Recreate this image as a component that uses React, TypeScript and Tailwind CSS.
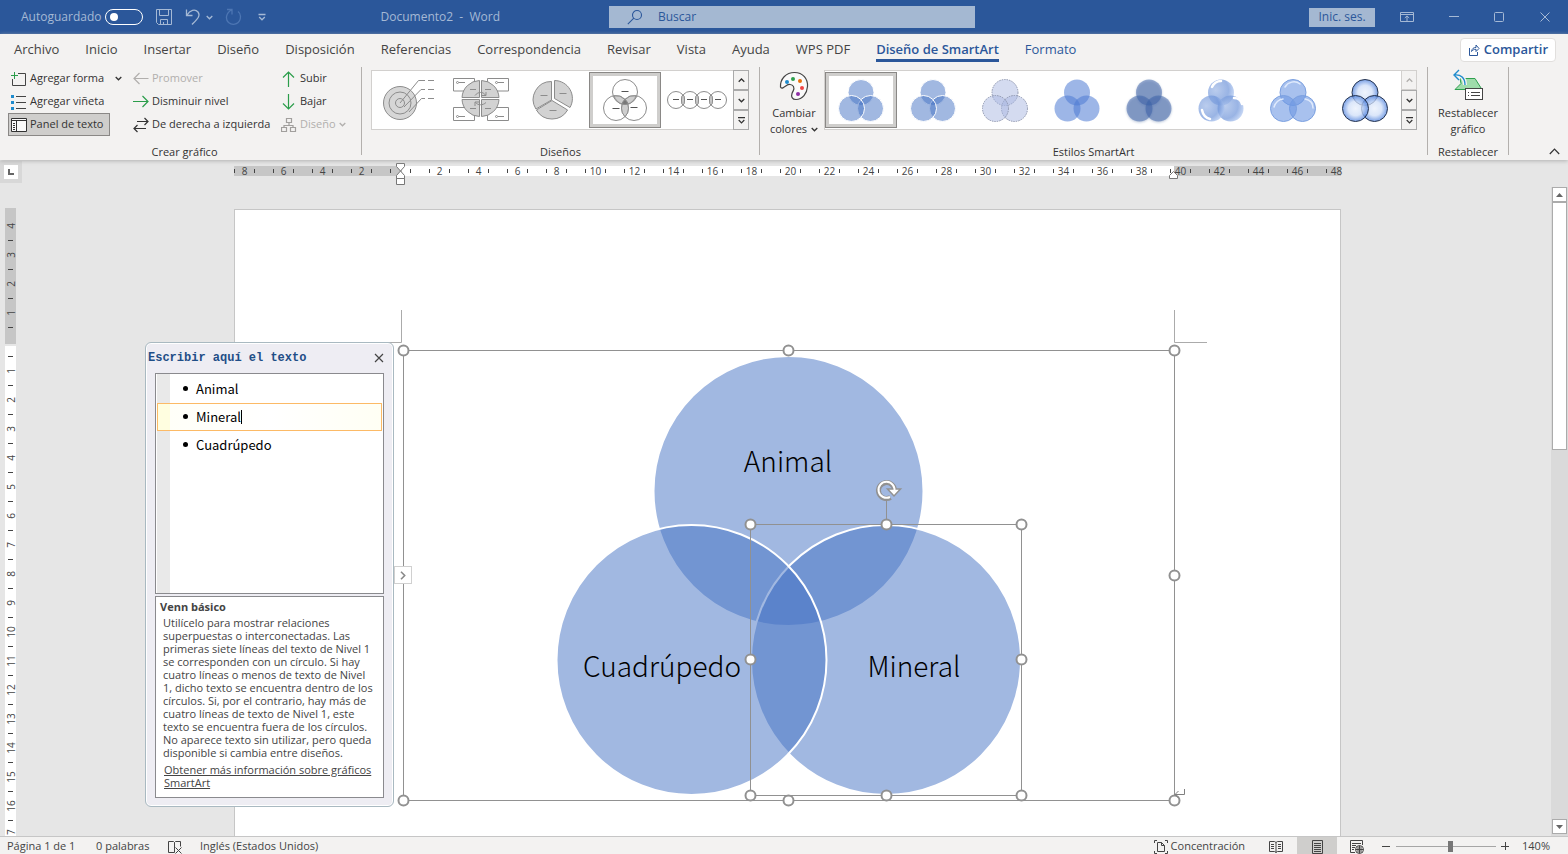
import type { ReactNode } from "react";

interface Tab {
  label: string;
  state?: "active" | "context";
}

const tabs: Tab[] = [
  { label: "Archivo" },
  { label: "Inicio" },
  { label: "Insertar" },
  { label: "Diseño" },
  { label: "Disposición" },
  { label: "Referencias" },
  { label: "Correspondencia" },
  { label: "Revisar" },
  { label: "Vista" },
  { label: "Ayuda" },
  { label: "WPS PDF" },
  { label: "Diseño de SmartArt", state: "active" },
  { label: "Formato", state: "context" },
];

const description = [
  "Utilícelo para mostrar relaciones",
  "superpuestas o interconectadas. Las",
  "primeras siete líneas del texto de Nivel 1",
  "se corresponden con un círculo. Si hay",
  "cuatro líneas o menos de texto de Nivel",
  "1, dicho texto se encuentra dentro de los",
  "círculos. Si, por el contrario, hay más de",
  "cuatro líneas de texto de Nivel 1, este",
  "texto se encuentra fuera de los círculos.",
  "No aparece texto sin utilizar, pero queda",
  "disponible si cambia entre diseños.",
];

const bullets = ["Animal", "Mineral", "Cuadrúpedo"];
const horizontalMarks = Array.from({ length: 29 }, (_, i) => i * 2 - 8);
const verticalMarks = Array.from({ length: 22 }, (_, i) => i - 4);

function Chevron({ up = false, className = "" }: { up?: boolean; className?: string }) {
  return (
    <svg width="7" height="5" viewBox="0 0 7 5" className={className} fill="none" stroke="currentColor" strokeWidth="1.3">
      <path d={up ? "M.7 3.8 3.5 1l2.8 2.8" : "M.7 1l2.8 2.8L6.3 1"} />
    </svg>
  );
}

function TitleBar() {
  return (
    <header className="grid h-[34px] shrink-0 grid-cols-[609fr_366fr_593fr] items-center bg-[#2b579a] text-xs text-[#a5b9d5]">
      <div className="flex items-center pl-[21px]">
        <label className="flex items-center gap-1">
          Autoguardado
          <input
            type="checkbox"
            className="h-4 w-[38px] appearance-none rounded-full border border-white before:ml-1 before:mt-[3px] before:block before:size-2 before:rounded-full before:bg-white"
          />
        </label>
        <button aria-label="Guardar" className="ml-3">
          <svg width="18" height="18" viewBox="0 0 18 18" fill="none" stroke="currentColor">
            <path d="M1.5 1.500h15v15h-13l-2-2zM4.500 1.500v6h9v-6M5.500 16.500v-5h7v5M8.500 16v-2" />
          </svg>
        </button>
        <button aria-label="Deshacer" className="ml-3 flex items-center gap-1">
          <svg width="17" height="18" viewBox="0 0 17 18" fill="none" stroke="currentColor" strokeWidth="1.300">
            <path d="M1.500 1.500v6h6M2 7C5 2 10 .5 13 4c3 4-1 7.500-6 12.500" />
          </svg>
          <Chevron />
        </button>
        <button aria-label="Rehacer" disabled className="ml-3 text-[#4d76b3]">
          <svg width="17" height="18" viewBox="0 0 17 18" fill="none" stroke="currentColor" strokeWidth="1.300">
            <path d="M2 1.500h5v5M6.500 2C1 5 0 11 3.500 14.500c5 4 12 1 12-6 0-2-1-4-2.500-5" />
          </svg>
        </button>
        <button aria-label="Personalizar barra" className="ml-4">
          <svg width="8" height="8" viewBox="0 0 8 8" fill="none" stroke="currentColor" strokeWidth="1.300">
            <path d="M.5 1.500h7M1.200 4 4 6.800 6.800 4" />
          </svg>
        </button>
        <span className="ml-auto mr-[109px] whitespace-pre">Documento2  -  Word</span>
      </div>
      <label className="flex h-[22px] items-center bg-[#a4b8d2] text-[#2b579a]">
        <svg width="16" height="16" viewBox="0 0 16 16" className="ml-[18px]" fill="none" stroke="currentColor" strokeWidth="1.100">
          <circle cx="10" cy="6" r="4.500" />
          <path d="M6.800 9.200.8 15.200" />
        </svg>
        <input type="text" placeholder="Buscar" aria-label="Buscar" className="ml-[15px] min-w-0 flex-1 bg-transparent outline-none placeholder:text-[#2b579a]" />
      </label>
      <div className="flex items-center justify-end pr-[18px]">
        <button className="h-[19px] w-[66px] bg-[#a4b8d2] text-[#2b579a]">Inic. ses.</button>
        <button aria-label="Opciones de la cinta" className="ml-[25px]">
          <svg width="14" height="12" viewBox="0 0 14 12" fill="none" stroke="currentColor">
            <path d="M.5 1.500h13v9H.5zM.5 3.500h13M7 10V5M4.800 7 7 4.900 9.200 7" />
          </svg>
        </button>
        <button aria-label="Minimizar" className="ml-[35px]">
          <svg width="10" height="12" viewBox="0 0 10 12" stroke="currentColor"><path d="M0 5.500h10" /></svg>
        </button>
        <button aria-label="Maximizar" className="ml-[35px]">
          <svg width="11" height="12" viewBox="0 0 11 12" fill="none" stroke="currentColor"><rect x=".5" y="1.500" width="9" height="9" rx="1" /></svg>
        </button>
        <button aria-label="Cerrar" className="ml-[35px]">
          <svg width="10" height="12" viewBox="0 0 10 12" fill="none" stroke="currentColor"><path d="M.5 1.500l9 9M9.500 1.500l-9 9" /></svg>
        </button>
      </div>
    </header>
  );
}

function Tabs() {
  return (
    <nav className="flex h-[31px] items-center pl-px pr-3 text-[13px]">
      {tabs.map((tab) => (
        <button
          key={tab.label}
          className={`h-full whitespace-nowrap px-[13px] ${tab.state ? "text-[#2b579a]" : "text-[#444]"} ${
            tab.state === "active" ? "font-semibold" : ""
          }`}
        >
          <span className={`block border-b-[3px] pt-[2px] leading-5 ${tab.state === "active" ? "border-[#2b579a]" : "border-transparent"}`}>
            {tab.label}
          </span>
        </button>
      ))}
      <button className="ml-auto flex h-6 items-center gap-1 rounded-sm border border-[#e1dfdd] bg-white px-[7px] font-semibold text-[#2b579a]">
        <svg width="12" height="12" viewBox="0 0 12 12" fill="none" stroke="currentColor">
          <path d="M1.500 4v7.500h8V8M3.500 7.500c.5-3 2-4 4.500-4V1l3 3.500-3 3V5.300c-2 0-3.500.7-4.500 2.200z" />
        </svg>
        Compartir
      </button>
    </nav>
  );
}

function Group({ label, className, children }: { label: string; className: string; children: ReactNode }) {
  return (
    <section className={`flex flex-col border-r border-[#b3b0ad] ${className}`}>
      <div className="flex h-[77px] shrink-0">{children}</div>
      <h2 className="shrink-0 text-center leading-4">{label}</h2>
    </section>
  );
}

function CommandButton({ icon, children, disabled, pressed }: { icon: ReactNode; children: ReactNode; disabled?: boolean; pressed?: boolean }) {
  return (
    <button
      disabled={disabled}
      aria-pressed={pressed}
      className={`flex h-[23px] items-center gap-[3px] whitespace-nowrap border px-[2px] ${
        pressed ? "border-[#8a8886] bg-[#cfcecc]" : "border-transparent"
      } ${disabled ? "text-[#b1afad]" : ""}`}
    >
      {icon}
      {children}
    </button>
  );
}

function Arrow({ d, color }: { d: string; color: string }) {
  return (
    <svg width="16" height="16" viewBox="0 0 16 16" fill="none" stroke={color} strokeWidth="1.200">
      <path d={d} />
    </svg>
  );
}

function CreateGroup() {
  return (
    <Group label="Crear gráfico" className="w-[354px]">
      <div className="flex w-[122px] flex-col items-start">
        <CommandButton
          icon={
            <svg width="16" height="16" viewBox="0 0 16 16" fill="none">
              <path d="M7 2.500h7.500v12h-13V8" stroke="#444" />
              <path d="M3.500 1v7M0 4.500h7" stroke="#2a9d4a" />
            </svg>
          }
        >
          Agregar forma <Chevron className="ml-2" />
        </CommandButton>
        <CommandButton
          icon={
            <svg width="16" height="16" viewBox="0 0 16 16">
              <path d="M5 2.500h10M5 8.500h10M5 14.500h10" stroke="#444" />
              <path d="M0 1h3v3H0zM0 7h3v3H0zM0 13h3v3H0z" fill="#1e8bcd" />
            </svg>
          }
        >
          Agregar viñeta
        </CommandButton>
        <CommandButton
          pressed
          icon={
            <svg width="16" height="16" viewBox="0 0 16 16" fill="none" stroke="#333">
              <path d="M.5 1.500h15v13H.5zM.5 3.500h15M5.500 3.500v11" fill="#fafafa" />
              <path d="M2 6.500h2M2 8.500h2M2 10.500h2M2 12.500h2" />
            </svg>
          }
        >
          <span className="pr-1">Panel de texto</span>
        </CommandButton>
      </div>
      <div className="flex w-[148px] flex-col items-start">
        <CommandButton disabled icon={<Arrow d="M15.500 7.500H1M6.500 2 1 7.500 6.500 13" color="#b1afad" />}>Promover</CommandButton>
        <CommandButton icon={<Arrow d="M0 7.500h15M9.500 2 15 7.500 9.500 13" color="#2a9d4a" />}>Disminuir nivel</CommandButton>
        <CommandButton icon={<Arrow d="M4 4.500h11M11.500 1 15 4.500 11.500 8M13 11.500H1M4.500 8 1 11.500 4.500 15" color="#333" />}>De derecha a izquierda</CommandButton>
      </div>
      <div className="flex flex-col items-start">
        <CommandButton icon={<Arrow d="M7.500 16V1M2 6.500 7.500 1 13 6.500" color="#2a9d4a" />}>Subir</CommandButton>
        <CommandButton icon={<Arrow d="M7.500 0v15M2 9.500 7.500 15 13 9.500" color="#2a9d4a" />}>Bajar</CommandButton>
        <CommandButton
          disabled
          icon={<Arrow d="M5.500 1.500h5v4h-5zM.5 10.500h5v4h-5zM9.500 10.500h5v4h-5zM8 5.500v3M3 10.500v-2h9v2" color="#a19f9d" />}
        >
          Diseño <Chevron />
        </CommandButton>
      </div>
    </Group>
  );
}

function GalleryScroller({ atTop = false }: { atTop?: boolean }) {
  return (
    <div className="flex w-4 flex-col text-[#333]">
      <button aria-label="Fila anterior" disabled={atTop} className={`flex flex-1 items-center justify-center border bg-[#f3f2f1] ${atTop ? "border-[#d2d0ce] text-[#b1afad]" : "border-[#aaa]"}`}>
        <Chevron up />
      </button>
      <button aria-label="Fila siguiente" className="flex flex-1 items-center justify-center border border-[#aaa] bg-[#f3f2f1]">
        <Chevron />
      </button>
      <button aria-label="Más" className="flex flex-1 items-center justify-center border border-[#aaa] bg-[#f3f2f1]">
        <svg width="7" height="7" viewBox="0 0 7 7" fill="none" stroke="currentColor" strokeWidth="1.200">
          <path d="M0 .6h7M.7 3l2.800 2.800L6.300 3" />
        </svg>
      </button>
    </div>
  );
}

function Thumb({ label, selected = false, children }: { label: string; selected?: boolean; children: ReactNode }) {
  return (
    <button
      aria-label={label}
      aria-pressed={selected}
      className={`h-[56px] w-[72px] ${selected ? "outline outline-1 -outline-offset-1 outline-[#8a8886] ring-4 ring-inset ring-[#cfcecc]" : ""}`}
    >
      <svg width="72" height="56" viewBox="0 0 72 56" fill="none" stroke="#8c8c8c">
        {children}
      </svg>
    </button>
  );
}

function LayoutsGroup() {
  return (
    <Group label="Diseños" className="w-[398px]">
      <div className="ml-[9px] mt-[3px] flex h-[60px]">
        <div className="flex border border-r-0 border-[#d2d0ce] bg-white pl-px pt-px">
          <Thumb label="Circular con llamadas">
            <circle cx="27" cy="31" r="16.500" fill="#d6d6d6" />
            <circle cx="27" cy="31" r="11" />
            <circle cx="27" cy="31" r="4.500" />
            <path d="M27 31 45.500 8.500H52M55 8.500h6M31 35l17-17.500h4M55 17.500h6M36 40l12.500-13.500H52M55 26.500h6" />
          </Thumb>
          <Thumb label="Matriz de ciclo">
            <path d="M8.500 6.500h21v12.500h-21zM42.500 6.500h21v12.500h-21zM8.500 35.500h21v13h-21zM42.500 35.500h21v13h-21z" fill="#fff" />
            <path d="M34.500 25.500h-17.500a18 18 0 0 1 17.500-17zM36.500 25.500H54a18 18 0 0 0-17.500-17zM34.500 27.500H17a18 18 0 0 0 17.500 17zM36.500 27.500H54a18 18 0 0 1-17.500 17z" fill="#d2d2d2" />
            <path d="M14 10.500h6M53 10.500h6M14 44.500h6M53 44.500h6M25 17.500h6M40 17.500h6M25 36.500h6M40 36.500h6M30 23.500c3-4 8-4 10.500-.5M41 20v3.500h-4M41 30.500c-3 3-8 3-10.500 0M30 34v-4h4" />
            <circle cx="12.500" cy="10.500" r="1" /><circle cx="51.500" cy="10.500" r="1" /><circle cx="12.500" cy="44.500" r="1" /><circle cx="51.500" cy="44.500" r="1" />
          </Thumb>
          <Thumb label="Circular básico">
            <path d="M34.500 28 18.900 37A18 18 0 0 1 34.500 9.500z" fill="#d2d2d2" />
            <path d="M35 28.500 50.600 38a18 18 0 0 1-31.200 0z" fill="#d2d2d2" />
            <path d="M37.500 26.500V8.500A18 18 0 0 1 53 35.500z" fill="#d2d2d2" />
            <path d="M23.500 23.500h7M42.500 21.500h7M32.500 38.500h7" />
          </Thumb>
          <Thumb label="Venn básico" selected>
            <circle cx="36" cy="20" r="12.500" />
            <circle cx="27" cy="36" r="12.500" />
            <circle cx="45" cy="36" r="12.500" />
            <path d="M25 23.800A12.500 12.500 0 0 1 36 27.500 12.500 12.500 0 0 0 33 32 12.500 12.500 0 0 1 25 23.800zM47 23.800A12.500 12.500 0 0 0 36 27.500 12.500 12.500 0 0 1 39 32 12.500 12.500 0 0 0 47 23.800z" fill="#cecece" />
            <path d="M36 27.500a12.500 12.500 0 0 1 0 17.300 12.500 12.500 0 0 1 0-17.300z" fill="#cecece" />
            <path d="M36 27.500q2.500 2.500 3 4.500-3 1-6 0 .5-2 3-4.500z" fill="#777" />
            <path d="M32.500 19.500h7M23.500 36.500h7M41.500 35.500h7" stroke="#555" />
          </Thumb>
          <Thumb label="Venn lineal">
            {[15, 29, 43, 57].map((cx) => (
              <g key={cx}>
                <circle cx={cx} cy="28" r="8.500" />
                <path d={`M${cx - 3} 27.500h6`} stroke="#555" />
              </g>
            ))}
            {[22, 36, 50].map((cx) => (
              <ellipse key={cx} cx={cx} cy="28" rx="1.500" ry="5" fill="#cecece" />
            ))}
          </Thumb>
        </div>
        <GalleryScroller />
      </div>
    </Group>
  );
}

function VennShape({ fill, stroke = "none", opacity = 0.5, filter }: { fill: string; stroke?: string; opacity?: number; filter?: string }) {
  return (
    <g fill={fill} stroke={stroke} fillOpacity={opacity} filter={filter}>
      <circle cx="36" cy="20.500" r="13" />
      <circle cx="45.500" cy="36.500" r="13" />
      <circle cx="26.500" cy="36.500" r="13" />
    </g>
  );
}

function StylesGroup() {
  return (
    <Group label="Estilos SmartArt" className="w-[668px]">
      <button className="flex w-[64px] flex-col items-center pl-1 pt-1">
        <svg width="30" height="30" viewBox="0 0 30 30">
          <path d="M1.500 16C1 8 7 1.500 15.500 1.500S29 8 28.500 15.500c-.5 7-5 13-11.500 13-4 0-5-3-4-6s3-4 1.500-7c-1.500-2.500-5-2.500-7-1s-5 4-6 1.500z" fill="#fafafa" stroke="#444" strokeWidth="1.200" />
          <circle cx="8" cy="11" r="2" fill="#1e8bcd" />
          <circle cx="14" cy="8" r="2" fill="#2fa04f" />
          <circle cx="21" cy="10" r="2" fill="#e8710a" />
          <circle cx="23" cy="17" r="2" fill="#ef4444" />
          <circle cx="19" cy="23" r="2" fill="#8e2fa5" />
        </svg>
        <span className="mt-1 leading-4">Cambiar</span>
        <span className="flex items-center gap-1 leading-4">colores <Chevron /></span>
      </button>
      <div className="mt-[3px] flex h-[60px]">
        <div className="flex border border-r-0 border-[#d2d0ce] bg-white pt-px">
          <Thumb label="Relleno blanco" selected><VennShape fill="#4472c4" stroke="#fff" /></Thumb>
          <Thumb label="Efecto sutil"><VennShape fill="#4472c4" stroke="#fff" /></Thumb>
          <Thumb label="Efecto moderado">
            <g strokeDasharray="1.500 1"><VennShape fill="#a9b8e2" stroke="#8d95ad" /></g>
          </Thumb>
          <Thumb label="Efecto intenso"><VennShape fill="#4d7ad4" opacity={0.55} /></Thumb>
          <Thumb label="Pulido">
            <defs>
              <filter id="soft"><feDropShadow dx="0" dy="1" stdDeviation="1" floodColor="#34568f" floodOpacity=".6" /></filter>
            </defs>
            <VennShape fill="#3b62a8" opacity={0.5} filter="url(#soft)" />
          </Thumb>
          <Thumb label="Caricatura">
            <defs>
              <radialGradient id="gloss" cx=".3" cy=".4" r=".7">
                <stop offset="0" stopColor="#9db7e6" /><stop offset=".7" stopColor="#6e94d9" /><stop offset="1" stopColor="#a9c2ee" />
              </radialGradient>
            </defs>
            <VennShape fill="url(#gloss)" opacity={0.7} />
            <path d="M27 15c2-4 5-6 9-6M17 38c1 5 4 8 8 9M49 26c4 0 7 2 8 6" stroke="#fff" strokeWidth="2.500" strokeLinecap="round" />
          </Thumb>
          <Thumb label="Metálico">
            <VennShape fill="#6e98e3" stroke="#7ba0e0" opacity={0.6} />
            <path d="M28 15c3-5 10-7 15-3M17 35c1-4 5-8 9-8M48 27c5 1 8 4 8 9" stroke="#dfeafc" strokeWidth="1.500" strokeLinecap="round" />
          </Thumb>
          <Thumb label="Escena plana">
            <defs>
              <radialGradient id="rim">
                <stop offset="0" stopColor="#e9f0fc" /><stop offset=".55" stopColor="#cfdef8" /><stop offset="1" stopColor="#4d80dc" />
              </radialGradient>
            </defs>
            <VennShape fill="url(#rim)" stroke="#26344f" opacity={0.75} />
          </Thumb>
        </div>
        <GalleryScroller atTop />
      </div>
    </Group>
  );
}

function Ribbon() {
  return (
    <div className="relative z-10 shrink-0 bg-[#f3f2f1] shadow-[0_1px_4px_#b0b0b0]">
      <Tabs />
      <div className="flex h-[95px] pb-[5px] pl-2 pt-[2px] text-[11px] text-[#333]">
        <CreateGroup />
        <LayoutsGroup />
        <StylesGroup />
        <Group label="Restablecer" className="w-[81px]">
          <button className="flex flex-1 flex-col items-center pt-[2px]">
            <svg width="32" height="32" viewBox="0 0 32 32" fill="none">
              <path d="M8 9.500h15l7 11H3l6-6z" fill="#9fdcab" stroke="#2fa04f" />
              <path d="M7 1 2 6l5 5M2 6c7-1 11 3 11 10" stroke="#f3f2f1" strokeWidth="4" />
              <path d="M7 1 2 6l5 5M2 6c7-1 11 3 11 10" stroke="#1e8bcd" strokeWidth="1.400" />
              <rect x="13.500" y="19.500" width="17" height="11" fill="#fff" stroke="#444" />
              <path d="M16 23.500h1M19 23.500h9M16 26.500h1M19 26.500h9" stroke="#444" />
            </svg>
            <span className="mt-1 leading-4">Restablecer</span>
            <span className="leading-4">gráfico</span>
          </button>
        </Group>
        <button aria-label="Contraer la cinta" className="ml-auto self-end pr-2">
          <svg width="11" height="7" viewBox="0 0 11 7" fill="none" stroke="currentColor" strokeWidth="1.200"><path d="M.8 6 5.500 1.200 10.200 6" /></svg>
        </button>
      </div>
    </div>
  );
}

function HorizontalRuler() {
  return (
    <div className="relative w-[1107px] shrink-0 self-start pt-1.5">
      <div className="h-[10px] bg-[linear-gradient(to_right,#c6c6c6_168px,#fff_168px,#fff_940px,#c6c6c6_940px)]">
        <div className="-ml-[9px] flex w-[1131px] text-[10px] leading-[10px] text-[#444]">
          {horizontalMarks.map((mark) => (
            <div key={mark} className="flex w-[39px] shrink-0 items-center justify-between px-[9px]">
              <i className="h-1 w-px bg-[#444]" />
              {mark !== 0 && <span>{Math.abs(mark)}</span>}
              <i className={`h-1 w-px ${mark === 48 ? "" : "bg-[#444]"}`} />
            </div>
          ))}
        </div>
      </div>
      <svg width="9" height="22" viewBox="0 0 9 22" className="absolute left-[162px] top-[3px]" fill="#fff" stroke="#777">
        <path d="M.5.500h8v3l-4 4.500-4-4.500zM.5 15.500v-3l4-4.500 4 4.500v3zM.5 15.500h8v6h-8z" />
      </svg>
      <svg width="9" height="8" viewBox="0 0 9 8" className="absolute left-[935px] top-[11px]" fill="#fff" stroke="#777">
        <path d="M.5 7.500v-3l4-4 4 4v3z" />
      </svg>
    </div>
  );
}

function VerticalRuler() {
  return (
    <div className="w-6 shrink-0 overflow-hidden pl-[5px]">
      <div className="w-[11px] bg-[linear-gradient(#c6c6c6_136px,#e6e6e6_136px,#e6e6e6_138px,#fff_138px)] pt-1 text-[10px] leading-[10px] text-[#444]">
        {verticalMarks.map((mark) => (
          <div key={mark} className="flex h-[29px] flex-col items-center">
            <span className="flex flex-1 -rotate-90 items-center">{mark !== 0 && Math.abs(mark)}</span>
            <i className="h-px w-[5px] bg-[#444]" />
          </div>
        ))}
      </div>
    </div>
  );
}

function TextPane() {
  return (
    <aside className="absolute -left-[90px] top-[132px] w-[249px] rounded-md border border-[#a9b9c1] bg-[#eeedf3] px-[9px] pb-2 shadow-[inset_0_0_0_1px_#fff]">
      <div className="-ml-[7px] flex h-[30px] items-center justify-between">
        <h2 className="font-['Liberation_Mono',monospace] text-xs font-bold text-[#1f4e87]">Escribir aquí el texto</h2>
        <button aria-label="Cerrar panel">
          <svg width="10" height="10" viewBox="0 0 10 10" stroke="#444" strokeWidth="1.200"><path d="M1 1l8 8M9 1 1 9" /></svg>
        </button>
      </div>
      <ul className="h-[221px] border border-[#8a8a8e] bg-white bg-[linear-gradient(to_right,#fff_1px,#e9e9e9_1px,#e9e9e9_14px,#fff_14px)] p-px text-[13px] text-black">
        {bullets.map((bullet) => (
          <li
            key={bullet}
            className={`flex h-[28px] items-center border pb-px pl-[25px] font-['Noto_Sans_CJK_SC','Open_Sans',sans-serif] ${
              bullet === "Mineral"
                ? "border-[#fcba66] bg-[linear-gradient(to_right,#fffee0_12px,#fffff8_12px,#fff_50%,#fffff4)]"
                : "border-transparent"
            }`}
          >
            <i className="mr-2 size-[5px] rounded-full bg-black" />
            {bullet}
            {bullet === "Mineral" && <i className="h-[14px] w-px bg-black" />}
          </li>
        ))}
      </ul>
      <div className="mt-[2px] h-[202px] border border-[#8a8a8e] bg-white text-[11px] leading-[13px] text-[#444]">
        <h3 className="pl-1 pt-[3px] font-bold">Venn básico</h3>
        <p className="mt-[3px] whitespace-nowrap pl-[7px]">
          {description.map((line) => (
            <span key={line} className="block">{line}</span>
          ))}
        </p>
        <a href="#smartart" className="ml-2 mt-1 block whitespace-nowrap underline">
          Obtener más información sobre gráficos <br />SmartArt
        </a>
      </div>
    </aside>
  );
}

function Handle({ x, y }: { x: number; y: number }) {
  return <circle cx={x} cy={y} r="5" fill="#fff" stroke="#919191" strokeWidth="2" />;
}

function Diagram() {
  return (
    <svg width="1105" height="640" viewBox="0 0 1105 640" className="block" fill="none">
      <path d="M166.500 100v32.500H134M939.500 100v32.500H972" stroke="#ababab" />
      <g fill="#4472c4" fillOpacity=".5" stroke="#fff" strokeWidth="2">
        <circle cx="553.500" cy="281" r="135" />
        <circle cx="651" cy="450" r="135" />
        <circle cx="456.500" cy="450" r="135" />
      </g>
      <g fill="#000" textAnchor="middle" className="font-['Noto_Sans_CJK_SC',sans-serif] text-[28px] font-light">
        <text x="553" y="262">Animal</text>
        <text x="679" y="467">Mineral</text>
        <text x="427" y="467">Cuadrúpedo</text>
      </g>
      <path d="M168.500 140.500h771v450h-771zM515.500 314.500h271v271h-271zM651.500 314.500v-26" stroke="#919191" />
      {[168.5, 553.5, 939.5].map((x) => (
        <g key={x}>
          <Handle x={x} y={140.5} />
          <Handle x={x} y={590.5} />
        </g>
      ))}
      <Handle x={939.5} y={365.5} />
      {[515.5, 651.5, 786.5].map((x) => (
        <g key={x}>
          <Handle x={x} y={314.5} />
          <Handle x={x} y={585.5} />
        </g>
      ))}
      <Handle x={515.5} y={449.5} />
      <Handle x={786.5} y={449.5} />
      <path d="M655.500 287.500a8 8 0 1 1 4-7" stroke="#919191" strokeWidth="5" />
      <path d="M652.500 279h13l-6.500 7z" fill="#fff" stroke="#919191" strokeWidth="1.500" />
      <path d="M655 287a8 8 0 1 1 4.200-5" stroke="#fff" strokeWidth="2" />
      <path d="M949.500 579v5.500H940M943.500 581l-3.500 3.500 3.500 3.500" stroke="#808080" />
    </svg>
  );
}

function Scrollbar() {
  return (
    <div className="mt-[27px] flex w-[17px] shrink-0 flex-col bg-[#dadada] px-px pb-[2px]">
      <button aria-label="Subir página" className="flex h-[15px] items-center justify-center border border-[#ababab] bg-white">
        <svg width="7" height="4" viewBox="0 0 7 4" fill="#666"><path d="M0 4 3.500 0 7 4z" /></svg>
      </button>
      <div className="h-[248px] border border-[#ababab] bg-white" />
      <button aria-label="Bajar página" className="mt-auto flex h-[15px] items-center justify-center border border-[#ababab] bg-white">
        <svg width="7" height="4" viewBox="0 0 7 4" fill="#666"><path d="M0 0l3.500 4L7 0z" /></svg>
      </button>
    </div>
  );
}

function Workspace() {
  return (
    <main className="flex min-h-0 flex-1 overflow-hidden">
      <div className="flex min-w-0 flex-1 flex-col">
        <div className="flex h-12 shrink-0">
          <div className="w-6 shrink-0">
            <button aria-label="Tabulación" className="mt-px flex size-[22px] items-center justify-center border-4 border-[#d8d8d8] bg-white">
              <svg width="6" height="6" viewBox="0 0 6 6" stroke="#666" strokeWidth="2" fill="none"><path d="M1 0v5h5" /></svg>
            </button>
          </div>
          <div className="flex flex-1 justify-center">
            <HorizontalRuler />
          </div>
        </div>
        <div className="flex min-h-0 flex-1">
          <VerticalRuler />
          <div className="flex flex-1 justify-center pt-px">
            <article className="relative w-[1107px] shrink-0 border border-b-0 border-[#c6c6c6] bg-white">
              <Diagram />
              <TextPane />
              <button aria-label="Ocultar panel" className="absolute left-[159px] top-[356px] flex h-[18px] w-[18px] items-center justify-center border border-[#d0d0d0] bg-white">
                <svg width="6" height="9" viewBox="0 0 6 9" fill="none" stroke="#8a8a8a" strokeWidth="1.600"><path d="M1 .8l3.700 3.700L1 8.200" /></svg>
              </button>
            </article>
          </div>
        </div>
      </div>
      <Scrollbar />
    </main>
  );
}

function StatusBar() {
  return (
    <footer className="z-10 flex h-[18px] shrink-0 items-center border-t border-[#c6c6c6] bg-[#f3f2f1] pl-[7px] pr-[18px] pt-[2px] text-[11px] text-[#444]">
      <span className="w-[89px]">Página 1 de 1</span>
      <span className="w-[72px]">0 palabras</span>
      <svg width="15" height="14" viewBox="0 0 15 14" className="mr-[17px]" fill="none" stroke="#444">
        <path d="M6.500 12.500v-10l-1-1h-5v11zM6.500 2.500l1-1h5v5M7.500 7.500l6 6M13.500 7.500l-6 6" />
      </svg>
      <span>Inglés (Estados Unidos)</span>
      <button className="ml-auto flex items-center gap-[3px]">
        <svg width="14" height="14" viewBox="0 0 14 14" fill="none" stroke="#444">
          <path d="M3 .5H.5V3M11 .5h2.500V3M3 13.500H.5V11M11 13.500h2.500V11M3.500 2.500h4l3 3v6h-7zM7.500 2.500v3h3" />
        </svg>
        Concentración
      </button>
      <button aria-label="Modo de lectura" className="ml-6">
        <svg width="14" height="13" viewBox="0 0 14 13" fill="none" stroke="#444">
          <path d="M.5 1.500h5l1.500 1 1.500-1h5v10h-5L7 12.500l-1.500-1h-5zM7 2.500v10M2 4.500h3M2 6.500h3M2 8.500h3M9 4.500h3M9 6.500h3M9 8.500h3" />
        </svg>
      </button>
      <button aria-label="Diseño de impresión" className="-mt-[2px] ml-[14px] flex h-[17px] w-10 items-center justify-center bg-[#cfcecc] pt-[2px]">
        <svg width="11" height="14" viewBox="0 0 11 14" fill="none" stroke="#444">
          <path d="M.5.500h10v13H.5zM2 3.500h7M2 5.500h7M2 7.500h7M2 9.500h7M2 11.500h7" />
        </svg>
      </button>
      <button aria-label="Diseño web" className="ml-[13px]">
        <svg width="14" height="14" viewBox="0 0 14 14" fill="none" stroke="#444">
          <path d="M5 12.500H.5v-12h12V5M2 3.500h9M2 5.500h4M2 7.500h3M2 9.500h2" />
          <circle cx="9.500" cy="9.500" r="4" />
          <path d="M5.500 9.500h8M9.500 5.500v8M8 6.500v6M11 6.500v6" />
        </svg>
      </button>
      <button aria-label="Alejar" className="ml-[18px]">
        <svg width="9" height="9" viewBox="0 0 9 9" stroke="#444"><path d="M0 4.500h8" /></svg>
      </button>
      <input
        type="range"
        aria-label="Zoom"
        defaultValue={55}
        className="mx-[5px] h-3 w-[100px] appearance-none bg-[linear-gradient(#a6a6a6,#a6a6a6)] bg-[length:100%_1px] bg-center bg-no-repeat [&::-webkit-slider-thumb]:h-[11px] [&::-webkit-slider-thumb]:w-[5px] [&::-webkit-slider-thumb]:appearance-none [&::-webkit-slider-thumb]:bg-[#777]"
      />
      <button aria-label="Acercar">
        <svg width="9" height="9" viewBox="0 0 9 9" stroke="#444"><path d="M0 4.500h8M4.500 0v8" /></svg>
      </button>
      <span className="ml-3">140%</span>
    </footer>
  );
}

export default function App() {
  return (
    <div className="flex h-screen flex-col overflow-hidden bg-[#e6e6e6] font-['Open_Sans','Noto_Sans',sans-serif]">
      <TitleBar />
      <Ribbon />
      <Workspace />
      <StatusBar />
    </div>
  );
}
